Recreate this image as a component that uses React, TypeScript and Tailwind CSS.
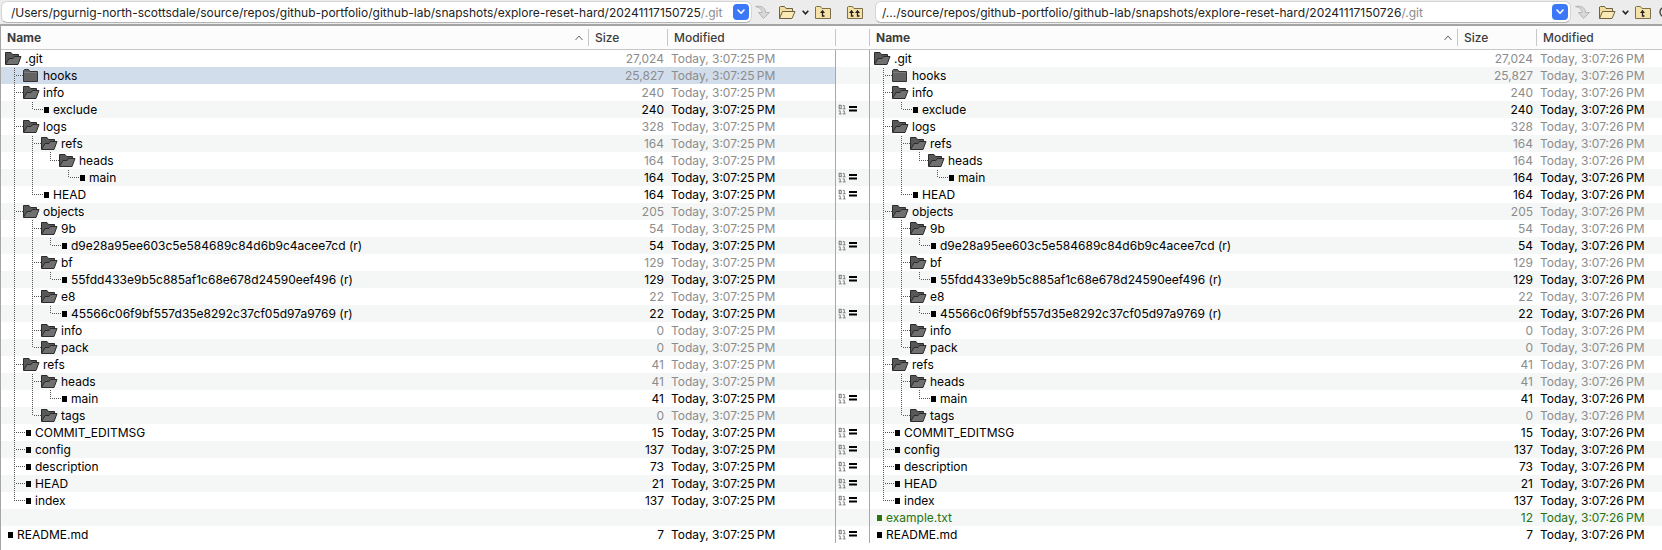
import React from "react";

type Row = { depth: number; name: string; size: string; kind: "open" | "closed" | "file"; same?: boolean; added?: boolean };

const d = (depth: number, name: string, size: string, kind: "open" | "closed" = "open"): Row => ({ depth, name, size, kind });
const f = (depth: number, name: string, size: string): Row => ({ depth, name, size, kind: "file", same: true });

const tree: Row[] = [
  d(0, ".git", "27,024"),
  d(1, "hooks", "25,827", "closed"),
  d(1, "info", "240"),
  f(2, "exclude", "240"),
  d(1, "logs", "328"),
  d(2, "refs", "164"),
  d(3, "heads", "164"),
  f(4, "main", "164"),
  f(2, "HEAD", "164"),
  d(1, "objects", "205"),
  d(2, "9b", "54"),
  f(3, "d9e28a95ee603c5e584689c84d6b9c4acee7cd (r)", "54"),
  d(2, "bf", "129"),
  f(3, "55fdd433e9b5c885af1c68e678d24590eef496 (r)", "129"),
  d(2, "e8", "22"),
  f(3, "45566c06f9bf557d35e8292c37cf05d97a9769 (r)", "22"),
  d(2, "info", "0"),
  d(2, "pack", "0"),
  d(1, "refs", "41"),
  d(2, "heads", "41"),
  f(3, "main", "41"),
  d(2, "tags", "0"),
  f(1, "COMMIT_EDITMSG", "15"),
  f(1, "config", "137"),
  f(1, "description", "73"),
  f(1, "HEAD", "21"),
  f(1, "index", "137"),
];
const readme = f(0, "README.md", "7");
const leftRows: (Row | null)[] = [...tree, null, readme];
const rightRows: (Row | null)[] = [...tree, { depth: 0, name: "example.txt", size: "12", kind: "file", added: true }, readme];

/** True when a later sibling exists at `level`, so its guide line carries on below row `i`. */
function continues(rows: (Row | null)[], i: number, level: number) {
  for (let k = i + 1; k < rows.length; k++) {
    const r = rows[k];
    if (!r || r.depth < level) return false;
    if (r.depth === level) return true;
  }
  return false;
}

function Guides({ rows, index }: { rows: (Row | null)[]; index: number }) {
  const row = rows[index]!;
  const cells = [];
  for (let level = 1; level <= row.depth; level++) {
    const own = level === row.depth;
    const more = continues(rows, index, level);
    const start = index % 2;
    cells.push(
      <svg key={level} width="18" height="17" className="shrink-0 overflow-visible" stroke="#555" strokeDasharray="1 1" fill="none" aria-hidden="true">
        {(own || more) && <path d={`M9.5 ${start}V${more ? 17 : 9}`} />}
        {own && <path d={`M11 8.5H${row.kind === "file" ? 20 : 18}`} />}
      </svg>
    );
  }
  return <>{cells}</>;
}

function TreeFolder({ open }: { open: boolean }) {
  return open ? (
    <svg width="17" height="17" className="shrink-0" aria-hidden="true">
      <path d="M.5 14V2.5H6L7.5 4.5H13.5V7" fill="#585858" stroke="#2b2b2b" />
      <path d="M.5 14.5L4 8.5H8L9.5 6.5H16L13 14.5Z" fill="#707070" stroke="#2b2b2b" />
    </svg>
  ) : (
    <svg width="17" height="17" className="shrink-0" aria-hidden="true">
      <path d="M.5 14.5V3.5L1.5 2.5H5.5L7 4.5H14.5V14.5Z" fill="#636363" stroke="#333" />
      <path d="M1 5.5H14" stroke="#7c7c7c" />
    </svg>
  );
}

function tone(row: Row) {
  if (row.added) return "text-[#267310]";
  return row.kind === "file" ? "text-black" : "text-[#8c8c8c]";
}

function FilePane({ rows, time, selected, tail, edge }: { rows: (Row | null)[]; time: string; selected?: number; tail: string; edge?: boolean }) {
  const head = "h-[24px] border-b border-[#c8c8c8] p-0 text-left font-medium";
  return (
    <table className="w-full table-fixed border-separate border-spacing-0">
      <colgroup>
        <col />
        <col className="w-[79px]" />
        <col className={tail} />
      </colgroup>
      <thead className="bg-[#fcfcfc] text-[#3c3c3c]">
        <tr>
          <th className={head}>
            <button className={`flex w-full items-center justify-between border-[#c8c8c8] pr-[5px] pl-[6px] font-bold ${edge ? "border-l" : ""}`}>
              Name
              <svg width="8" height="6" fill="none" stroke="#666" aria-hidden="true"><path d="M.5 5L4 1L7.5 5" /></svg>
            </button>
          </th>
          <th className={head}><button className="block w-full border-l border-[#c8c8c8] pl-[6px] text-left">Size</button></th>
          <th className={head}><button className="block w-full border-l border-[#c8c8c8] pl-[6px] text-left">Modified</button></th>
        </tr>
      </thead>
      <tbody>
        {rows.map((row, i) => (
          <tr key={i} className={selected === i ? "bg-[#d2ddec]" : i % 2 ? "bg-[#f5f7f6]" : "bg-white"}>
            {row ? (
              <>
                <td className={`h-[17px] border-[#a8a8a8] p-0 ${edge ? "border-l" : ""}`}>
                  <div className={`flex h-[17px] items-center pl-[4px] whitespace-nowrap ${row.added ? "text-[#267310]" : "text-black"}`}>
                    <Guides rows={rows} index={i} />
                    {row.kind === "file" ? (
                      <span className="mr-[4px] ml-[3px] h-[6px] w-[5px] shrink-0 bg-current" />
                    ) : (
                      <span className="mr-[3px] flex"><TreeFolder open={row.kind === "open"} /></span>
                    )}
                    {row.name}
                  </div>
                </td>
                <td className={`p-0 pr-[3px] text-right ${tone(row)}`}>{row.size}</td>
                <td className={`p-0 pl-[4px] whitespace-nowrap ${tone(row)}`}>Today, {time}{"\u2009"}PM</td>
              </>
            ) : (
              <td colSpan={3} className="h-[17px] p-0" />
            )}
          </tr>
        ))}
      </tbody>
    </table>
  );
}

function ToolFolder({ kind }: { kind: "open" | "up" | "top" }) {
  if (kind === "open")
    return (
      <svg width="17" height="16" className="block" aria-hidden="true" strokeLinejoin="round">
        <path d="M.5 14.5V3L1.5 2.5H5.5L7 4.5H13.5V7" fill="#f3dda0" stroke="#6b6144" />
        <path d="M.5 14.5L3.5 7.5H16L13 14.5Z" fill="#fbe9b4" stroke="#6b6144" />
      </svg>
    );
  return (
    <svg width="17" height="16" className="block" aria-hidden="true">
      <path d="M.5 14.5V3L1.5 2.5H5.5L7 4.5H15.5V14.5Z" fill="#f6e2a6" stroke="#7a7050" />
      {(kind === "up" ? [7.5] : [4.5, 10.5]).map((x) => (
        <g key={x}>
          <path d={`M${x - 2.5} 9L${x} 5.8L${x + 2.5} 9Z`} fill="#222" />
          <path d={`M${x} 8V12H${x + 2}`} fill="none" stroke="#222" strokeWidth="1.3" />
        </g>
      ))}
    </svg>
  );
}

function PathBar({ path, label, more }: { path: string; label: string; more?: boolean }) {
  return (
    <div className={`flex h-[24px] items-center overflow-hidden bg-[#ececec] ${more ? "pl-[6px]" : "pl-px"}`}>
      <div className={`flex h-[22px] min-w-0 flex-1 items-center rounded-[6px] border border-[#d4d4d4] border-b-[#b4b4b4] bg-white pr-[2px] text-[#222] ${more ? "pl-[6px]" : "pl-[9px]"}`}>
        <input aria-label={label} defaultValue={path} className="field-sizing-content min-w-0 bg-transparent outline-none" />
        <span className="text-[#8c8c8c]">/.git</span>
        <button aria-label="Recent folders" className="ml-auto flex h-[16px] w-[16px] shrink-0 items-center justify-center rounded-[4px] bg-[#3b78f7]">
          <svg width="8" height="6" fill="none" stroke="white" strokeWidth="1.6" strokeLinecap="round" strokeLinejoin="round"><path d="M1 1L4 4.2L7 1" /></svg>
        </button>
      </div>
      <div className={`flex shrink-0 items-center ${more ? "w-[91px] pl-[4px]" : "w-[83px] pl-[3px]"}`}>
        <button aria-label="Go to folder" className="w-[24px] shrink-0">
          <svg width="15" height="14" className="block" aria-hidden="true"><path d="M.5 1.5C6 .5 10.5 2.5 10.5 7.5H14.5L8.5 13.5L3.5 7.5H7C7 4.5 5 2.5 .5 1.5Z" fill="#d8d8d8" stroke="#b4b4b4" /></svg>
        </button>
        <button aria-label="Browse" className="w-[23px] shrink-0"><ToolFolder kind="open" /></button>
        <button aria-label="Browse history" className="w-[13px] shrink-0">
          <svg width="7" height="5" className="block" fill="none" stroke="#222" strokeWidth="1.6"><path d="M.7 .8L3.5 3.8L6.3 .8" /></svg>
        </button>
        <button aria-label="Up one level" className="w-[24px] shrink-0"><ToolFolder kind="up" /></button>
        {more && (
          <button aria-label="More" className="shrink-0">
            <svg width="12" height="12" className="block" fill="none" stroke="#444" strokeWidth="1.4"><circle cx="6" cy="6" r="5" /></svg>
          </button>
        )}
      </div>
    </div>
  );
}

export default function App() {
  return (
    <main className="grid min-h-screen grid-cols-[835fr_34px_793fr] overflow-hidden bg-white font-[Inter,sans-serif] text-[12px] leading-[17px]">
      <section className="flex min-w-0 flex-col">
        <PathBar label="Left folder path" path="/Users/pgurnig-north-scottsdale/source/repos/github-portfolio/github-lab/snapshots/explore-reset-hard/20241117150725" />
        <div className="flex-1 border-t-2 border-l border-[#a5a5a5]">
          <FilePane rows={leftRows} time="3:07:25" selected={1} tail="w-[168px]" />
        </div>
      </section>
      <section>
        <div className="flex h-[24px] items-center bg-[#ececec] pl-[12px]">
          <button aria-label="Both sides up one level"><ToolFolder kind="top" /></button>
        </div>
        <div className="border-t-2 border-[#a5a5a5]">
          <div className="flex h-[24px] items-center border-b border-[#c8c8c8] bg-[#fcfcfc]"><span className="h-[17px] border-l border-[#c8c8c8]" /></div>
          <ul className="border-l border-[#a8a8a8]">
            {rightRows.map((row, i) => (
              <li key={i} className={`flex h-[17px] items-center ${i % 2 ? "bg-[#f5f7f6]" : "bg-white"}`}>
                {row?.same && (
                  <svg width="24" height="17" role="img" aria-label="Binary same">
                    <g fill="none" stroke="#777">
                      <rect x="3.2" y="4.3" width="2" height="3.4" />
                      <path d="M6.8 4.5H8.3V8M6.8 7.8H9.6M2.6 9.9H4.2V13M2.8 12.9H5.6M6.8 9.9H8.3V13M6.8 12.9H9.6" strokeWidth=".9" />
                    </g>
                    <path d="M13 5H21V7H13ZM13 8.4H21V10.4H13Z" fill="black" />
                  </svg>
                )}
              </li>
            ))}
          </ul>
        </div>
      </section>
      <section className="min-w-0">
        <PathBar label="Right folder path" path="/.../source/repos/github-portfolio/github-lab/snapshots/explore-reset-hard/20241117150726" more />
        <div className="border-t-2 border-[#a5a5a5]">
          <FilePane rows={rightRows} time="3:07:26" tail="w-[126px]" edge />
        </div>
      </section>
    </main>
  );
}
